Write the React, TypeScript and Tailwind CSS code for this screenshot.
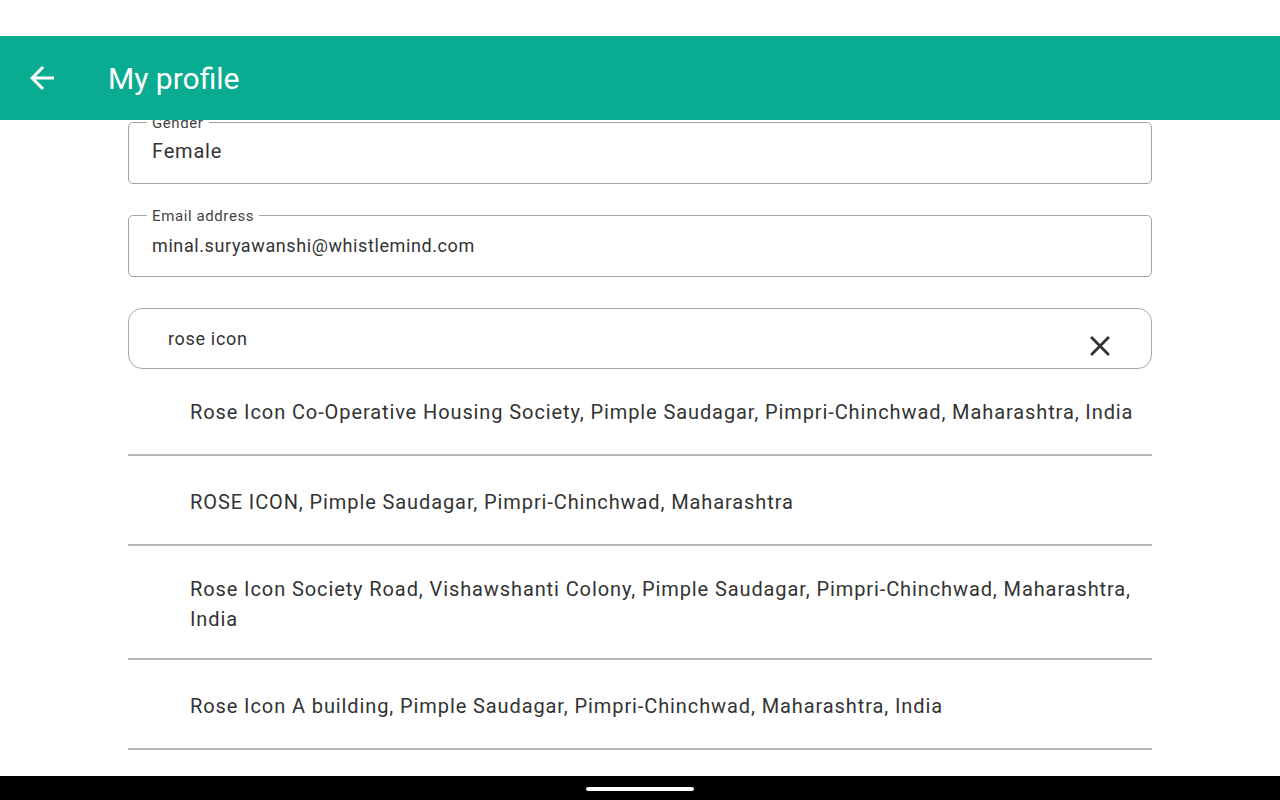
import React from 'react';

const font = { fontFamily: 'Roboto, "Noto Sans", sans-serif' };

const suggestions = [
  'Rose Icon Co-Operative Housing Society, Pimple Saudagar, Pimpri-Chinchwad, Maharashtra, India',
  'ROSE ICON, Pimple Saudagar, Pimpri-Chinchwad, Maharashtra',
  'Rose Icon Society Road, Vishawshanti Colony, Pimple Saudagar, Pimpri-Chinchwad, Maharashtra, India',
  'Rose Icon A building, Pimple Saudagar, Pimpri-Chinchwad, Maharashtra, India',
];

const OutlinedField: React.FC<{ label: string; value: string; valueClass: string }> = ({ label, value, valueClass }) => (
  <div className="relative h-[62px] rounded-[5px] border-[1.5px] border-[#a3a3a3] flex items-center px-[23px]">
    <span className="absolute left-[18px] -top-[9px] bg-white px-[5px] text-[15px] leading-[18px] tracking-[0.6px] text-[#444]">
      {label}
    </span>
    <span className={valueClass}>{value}</span>
  </div>
);

export default function App() {
  return (
    <div className="w-[1280px] h-[800px] flex flex-col bg-white overflow-hidden" style={font}>
      <div className="h-[36px] bg-white" />
      <header className="relative z-10 h-[84px] bg-[#0aac91] flex items-center">
        <button className="ml-[24px] w-[36px] h-[36px] flex items-center justify-center text-white">
          <svg width="36" height="36" viewBox="0 0 24 24" fill="currentColor">
            <path d="M20 11H7.83l5.59-5.59L12 4l-8 8 8 8 1.41-1.41L7.83 13H20v-2z" />
          </svg>
        </button>
        <h1 className="ml-[48px] mt-[2px] text-[30px] leading-[36px] text-white font-normal">My profile</h1>
      </header>

      <main className="flex-1 overflow-hidden px-[128px] pt-[2px]">
        <OutlinedField label="Gender" value="Female" valueClass="text-[20px] tracking-[0.8px] text-[#333] -mt-[4px]" />
        <div className="h-[31px]" />
        <OutlinedField
          label="Email address"
          value="minal.suryawanshi@whistlemind.com"
          valueClass="text-[18px] tracking-[0.6px] text-[#333] -mt-[1px]"
        />
        <div className="h-[31px]" />
        <div className="h-[61px] rounded-[14px] border border-[#a8a8a8] flex items-center pl-[39px] pr-[34px]">
          <span className="flex-1 text-[18px] tracking-[0.67px] text-[#333] -mt-[1px]">rose icon</span>
          <svg width="34" height="34" viewBox="0 0 24 24" fill="#333" className="mt-[14px]">
            <path d="M19 6.41L17.59 5 12 10.59 6.41 5 5 6.41 10.59 12 5 17.59 6.41 19 12 13.41 17.59 19 19 17.59 13.41 12z" />
          </svg>
        </div>
        <ul className="-mt-[3px]">
          {suggestions.map((s) => (
            <li
              key={s}
              className="min-h-[90px] flex items-center pt-[28px] pb-[24px] pl-[62px] pr-[10px] border-b-2 border-[#b8b8b8] text-[20px] leading-[30px] tracking-[0.9px] text-[#333]"
            >
              {s}
            </li>
          ))}
        </ul>
      </main>

      <footer className="h-[24px] bg-black flex items-start justify-center">
        <div className="mt-[11px] w-[108px] h-[4px] rounded-full bg-white" />
      </footer>
    </div>
  );
}
